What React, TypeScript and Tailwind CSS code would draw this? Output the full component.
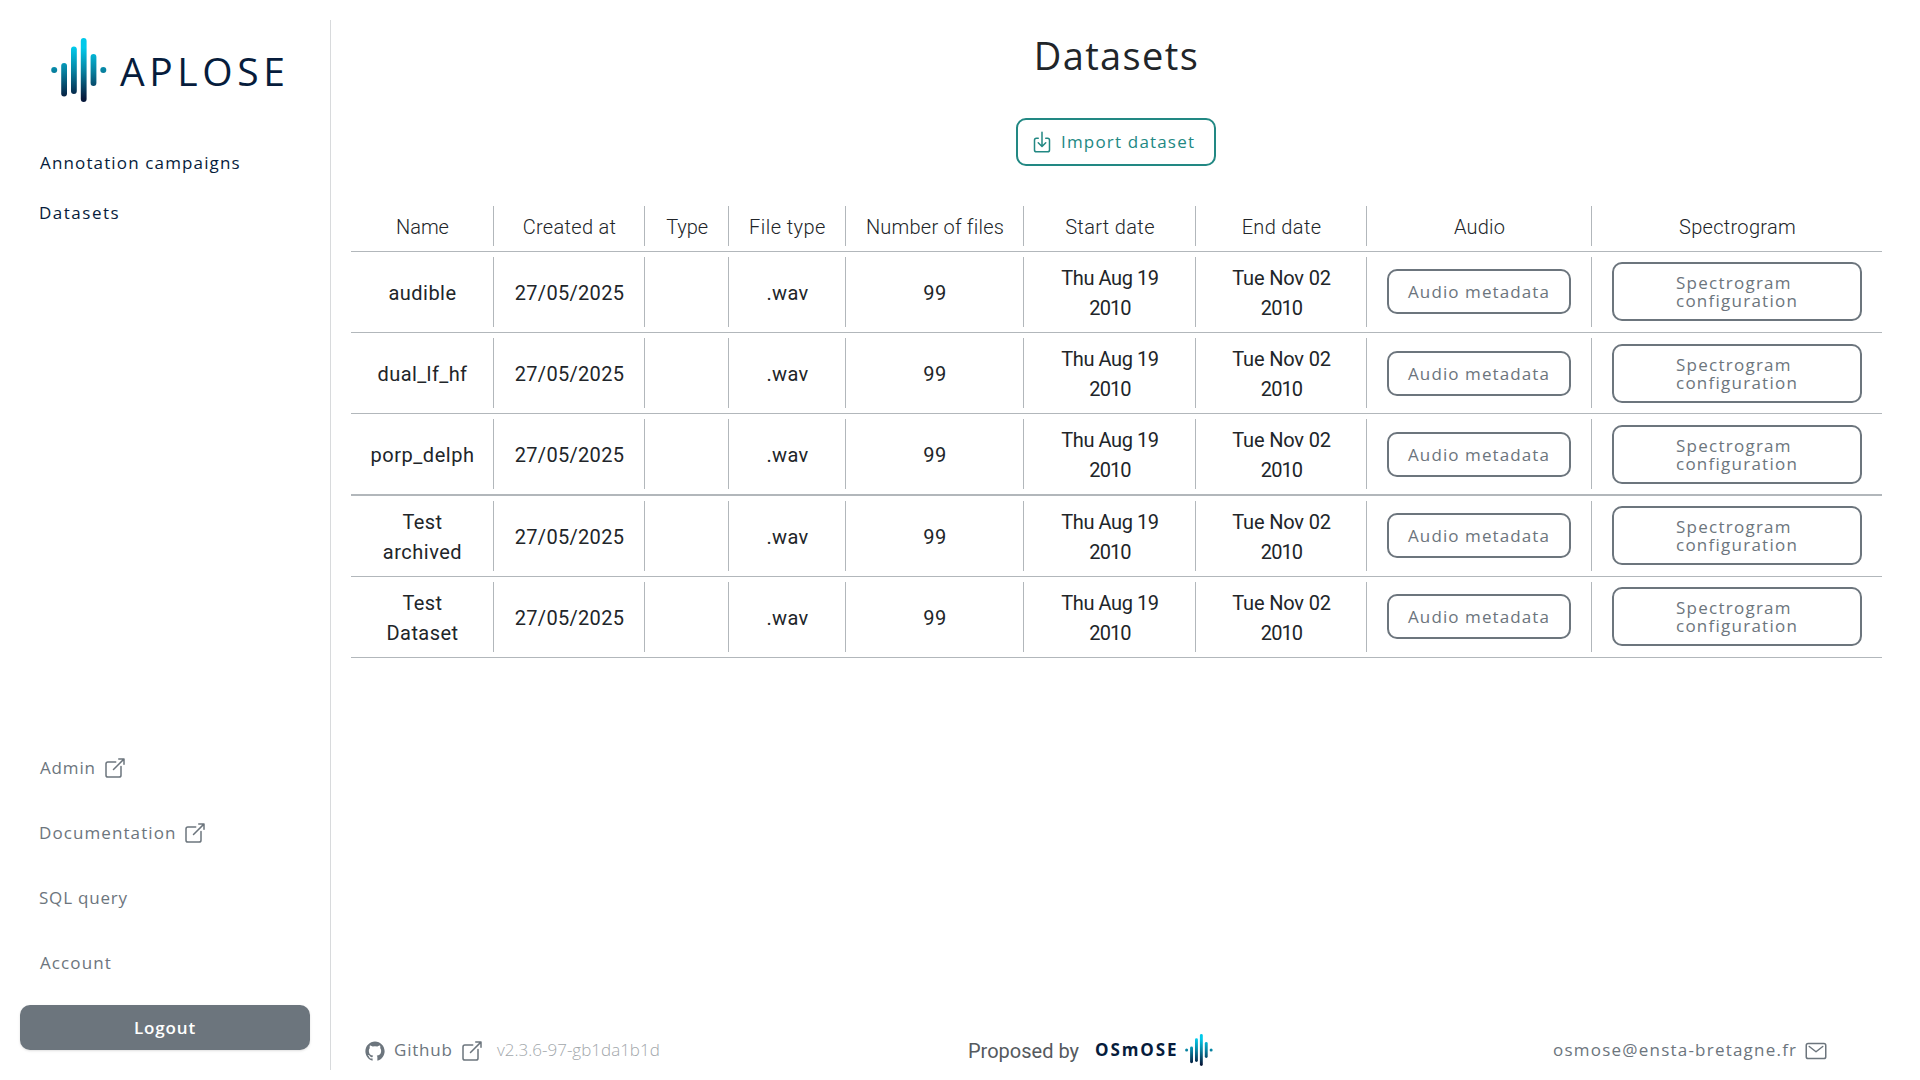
import React from "react";
import { IoDownloadOutline, IoLogoGithub, IoMailOutline, IoOpenOutline } from "react-icons/io5";

type Dataset = { name: [string, string][] };

const DATASETS: Dataset[] = [
  { name: [["audible", "tracking-[0.48px]"]] },
  { name: [["dual_lf_hf", "tracking-[0.4px]"]] },
  { name: [["porp_delph", "tracking-[0.54px]"]] },
  { name: [["Test", "tracking-[0.4px]"], ["archived", "tracking-[0.5px]"]] },
  { name: [["Test", "tracking-[0.4px]"], ["Dataset", "tracking-[0.44px]"]] },
];

const HEADERS: [string, string][] = [
  ["Name", "tracking-[-0.06px]"],
  ["Created at", "tracking-[0.32px]"],
  ["Type", "tracking-[-0.12px]"],
  ["File type", "tracking-[0.44px]"],
  ["Number of files", "tracking-[0.23px]"],
  ["Start date", "tracking-[0.35px]"],
  ["End date", "tracking-[0.34px]"],
  ["Audio", "tracking-[0.2px]"],
  ["Spectrogram", "tracking-[0.3px]"],
];

const COLUMNS = "grid grid-cols-[143px_151px_84px_117px_178px_172px_171px_225px_290px]";

function Wave({ id, className }: { id: string; className: string }) {
  return (
    <svg viewBox="0 0 56 64" className={className} aria-hidden="true">
      <defs>
        <linearGradient id={id} gradientUnits="userSpaceOnUse" x1="0" y1="0" x2="0" y2="64">
          <stop offset="0.15" stopColor="#00c9ea" />
          <stop offset="0.52" stopColor="#07809f" />
          <stop offset="0.95" stopColor="#06183a" />
        </linearGradient>
      </defs>
      <g fill={`url(#${id})`}>
        <circle cx="3.2" cy="32" r="3" />
        <rect x="10.2" y="25" width="5.8" height="33.5" rx="2.9" />
        <rect x="20" y="8.5" width="5.8" height="47.5" rx="2.9" />
        <rect x="29.8" y="0" width="5.8" height="64" rx="2.9" />
        <rect x="39.6" y="16" width="5.8" height="32" rx="2.9" />
        <circle cx="52.3" cy="32" r="3" />
      </g>
    </svg>
  );
}

function Cell({ children, last = false }: { children?: React.ReactNode; last?: boolean }) {
  return (
    <div
      className={
        last
          ? "my-[5px] flex items-center justify-center pt-[2px] pl-px"
          : "my-[5px] flex items-center justify-center border-r border-[#b2b7bb] pt-[2px] pl-px"
      }
    >
      <div>{children}</div>
    </div>
  );
}

function Line({ t, className = "" }: { t: string; className?: string }) {
  return (
    <div className="text-center">
      <span className={className}>{t}</span>
    </div>
  );
}

function Row({ dataset, thick, lowered }: { dataset: Dataset; thick: boolean; lowered: boolean }) {
  return (
    <div className={thick ? `${COLUMNS} h-[82px] border-b-2 border-[#b2b7bb]` : `${COLUMNS} h-[81px] border-b border-[#b2b7bb]`}>
      <Cell>
        {dataset.name.map(([t, c]) => (
          <Line key={t} t={t} className={c} />
        ))}
      </Cell>
      <Cell><Line t="27/05/2025" className="tracking-[0.31px]" /></Cell>
      <Cell />
      <Cell><Line t=".wav" className="tracking-[0.32px]" /></Cell>
      <Cell><Line t="99" className="tracking-[0.5px]" /></Cell>
      <Cell>
        <Line t="Thu Aug 19" className="tracking-[-0.43px]" />
        <Line t="2010" className="tracking-[-0.91px]" />
      </Cell>
      <Cell>
        <Line t="Tue Nov 02" className="tracking-[-0.17px]" />
        <Line t="2010" className="tracking-[-0.91px]" />
      </Cell>
      <div className={`my-[5px] border-r border-[#b2b7bb] pl-5 ${lowered ? "pt-[13px]" : "pt-3"}`}>
        <button className="block h-[45px] w-[184px] rounded-[10px] border-2 border-[#6c757d] pl-[19px] text-left font-['Open_Sans'] text-[17px] leading-[41px] font-medium tracking-[1.1px] text-[#6c757d]">
          Audio metadata
        </button>
      </div>
      <div className={`pl-5 ${lowered ? "pt-[11px]" : "pt-[10px]"}`}>
        <button className="block h-[59px] w-[250px] rounded-[10px] border-2 border-[#6c757d] pr-[60px] pl-[62px] text-left font-['Open_Sans'] text-[17px] leading-[18px] font-medium tracking-[1.25px] text-[#6c757d]">
          Spectrogram configuration
        </button>
      </div>
    </div>
  );
}

export default function App() {
  return (
    <div className="flex h-screen w-full bg-white pt-5 pb-[10px] font-['Roboto',sans-serif] text-[#212529]">
      <aside className="flex w-[331px] shrink-0 flex-col border-r border-[#d8dadc] px-5 pb-5 font-['Open_Sans',sans-serif]">
        <div className="flex h-[100px] pt-[18px] pl-[31px] text-[#061c3c]">
          <Wave id="wave-large" className="h-16 w-14" />
          <span className="ml-[13px] pt-[11px] text-[39px] leading-[44px] tracking-[4.6px]">APLOSE</span>
        </div>
        <nav className="flex flex-col gap-5 pt-7 pl-5 text-[17px] leading-[30px] font-medium text-[#061c3c]">
          <a className="tracking-[1.14px]">Annotation campaigns</a>
          <a className="-ml-px tracking-[1.5px]">Datasets</a>
        </nav>
        <div className="mt-auto flex flex-col gap-5 text-[17px] font-medium text-[#6c757d]">
          <a className="flex h-[45px] items-center pl-5">
            <span className="w-[63px] tracking-[0.83px]">Admin</span>
            <IoOpenOutline className="mt-px size-6" />
          </a>
          <a className="flex h-[45px] items-center pl-[19px]">
            <span className="w-[144px] tracking-[1.09px]">Documentation</span>
            <IoOpenOutline className="mt-px size-6" />
          </a>
          <a className="flex h-[45px] items-center pl-[19px] tracking-[0.8px]">SQL query</a>
          <a className="flex h-[45px] items-center pl-5 tracking-[1.1px]">Account</a>
          <button className="h-[45px] w-[290px] rounded-[10px] bg-[#6c757d] font-semibold tracking-[0.86px] text-white shadow-sm">
            Logout
          </button>
        </div>
      </aside>
      <main className="flex flex-1 flex-col pl-5">
        <h1 className="w-[1531px] text-center font-['Open_Sans'] text-[38px] leading-[70px] tracking-[1.38px]">Datasets</h1>
        <button className="mt-[28px] ml-[665px] flex h-12 w-[200px] items-center rounded-[10px] border-2 border-[#228883] pl-3 font-['Open_Sans'] text-[17px] font-medium text-[#228883]">
          <IoDownloadOutline className="size-6" />
          <span className="ml-[7px] tracking-[1.18px]">Import dataset</span>
        </button>
        <section className="mt-[35px] w-[1531px] text-xl leading-[30px]">
          <div className={`${COLUMNS} h-[51px] border-b border-[#b2b7bb] font-light`}>
            {HEADERS.map(([t, c], i) => (
              <Cell key={t} last={i === HEADERS.length - 1}><Line t={t} className={c} /></Cell>
            ))}
          </div>
          {DATASETS.map((d, i) => (
            <Row key={i} dataset={d} thick={i === 2} lowered={i === 1 || i === 2} />
          ))}
        </section>
        <footer className="mt-auto flex h-10 items-center pl-[13px] font-['Open_Sans'] text-[17px] font-medium text-[#6c757d]">
          <IoLogoGithub className="mt-px size-[22px]" />
          <span className="ml-2 w-[66px] tracking-[0.79px]">Github</span>
          <IoOpenOutline className="mt-0.5 size-6" />
          <span className="ml-[13px] w-[471px] font-light text-[#a2a7ab]">v2.3.6-97-gb1da1b1d</span>
          <span className="w-[127px] pt-[2px] font-['Roboto'] text-xl font-normal text-[#555a5e]">Proposed by</span>
          <span className="w-[90px] font-bold tracking-[1.9px] text-[#061c3c]">OSmOSE</span>
          <Wave id="wave-small" className="h-8 w-7" />
          <span className="ml-[340px] w-[251px] tracking-[1.22px]">osmose@ensta-bretagne.fr</span>
          <IoMailOutline className="mt-px size-6" />
        </footer>
      </main>
    </div>
  );
}
